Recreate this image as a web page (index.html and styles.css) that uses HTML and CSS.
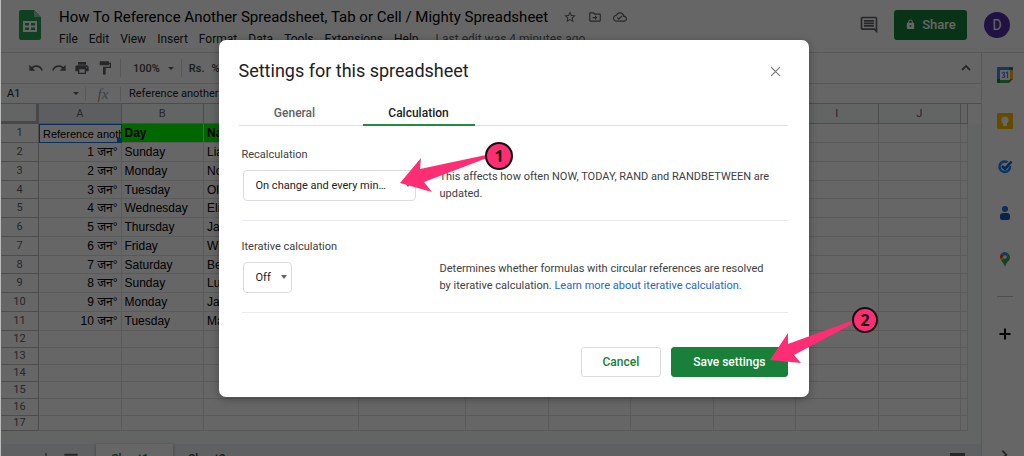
FILE: index.html
```html
<!DOCTYPE html>
<html lang="en">
<head>
<meta charset="utf-8">
<title>How To Reference Another Spreadsheet, Tab or Cell / Mighty Spreadsheet</title>
<link rel="stylesheet" href="styles.css">
</head>
<body>
<div class="app">
  <header class="header">
    <svg class="logo" viewBox="0 0 22 30"><path fill="#23a455" d="M2 0h13l7 7v21a2 2 0 0 1-2 2H2a2 2 0 0 1-2-2V2a2 2 0 0 1 2-2z"/><path fill="#8ed1b1" d="M15 0l7 7h-7z"/><path fill="#fff" fill-rule="evenodd" d="M4 11h14v11H4zM6 13v2.500h4V13zM12 13v2.500h4V13zM6 17.500V20h4v-2.500zM12 17.500V20h4v-2.500z"/></svg>
    <div class="doc">
      <div class="doc-top">
        <h1 class="doc-title">How To Reference Another Spreadsheet, Tab or Cell / Mighty Spreadsheet</h1>
        <svg class="icon14" viewBox="0 0 24 24"><path d="M22 9.240l-7.190-.620L12 2 9.190 8.630 2 9.240l5.460 4.730L5.820 21 12 17.270 18.180 21l-1.630-7.030L22 9.240zM12 15.400l-3.760 2.270 1-4.280-3.320-2.880 4.380-.380L12 6.100l1.710 4.040 4.380.380-3.320 2.880 1 4.280L12 15.400z"/></svg>
        <svg class="icon14" viewBox="0 0 24 24"><path d="M20 6h-8l-2-2H4c-1.100 0-2 .900-2 2v12c0 1.100.900 2 2 2h16c1.100 0 2-.900 2-2V8c0-1.100-.900-2-2-2zm0 12H4V6h5.170l2 2H20v10zm-8-1l4-4-4-4v3H8v2h4z"/></svg>
        <svg class="icon14" viewBox="0 0 24 24"><path d="M19.350 10.040C18.670 6.590 15.640 4 12 4 9.110 4 6.600 5.640 5.350 8.040 2.340 8.360 0 10.910 0 14c0 3.310 2.690 6 6 6h13c2.760 0 5-2.240 5-5 0-2.640-2.050-4.780-4.650-4.960zM19 18H6c-2.210 0-4-1.790-4-4s1.790-4 4-4h.710C7.370 7.690 9.480 6 12 6c3.040 0 5.500 2.460 5.500 5.500v.500H19c1.660 0 3 1.340 3 3s-1.340 3-3 3zm-9-3.820l-2.090-2.090L6.500 13.500 10 17l6.010-6.010-1.410-1.410z"/></svg>
      </div>
      <nav class="menu">
        <button>File</button><button>Edit</button><button>View</button><button>Insert</button><button>Format</button><button>Data</button><button>Tools</button><button>Extensions</button><button>Help</button>
        <a class="last-edit" href="#">Last edit was 4 minutes ago</a>
      </nav>
    </div>
    <svg class="icon20" viewBox="0 0 24 24"><path d="M21.990 4c0-1.100-.890-2-1.990-2H4c-1.100 0-2 .900-2 2v12c0 1.100.900 2 2 2h14l4 4-.010-18zM20 4v13.170L18.830 16H4V4h16zM6 12h12v2H6zm0-3h12v2H6zm0-3h12v2H6z"/></svg>
    <button class="share"><svg viewBox="0 0 24 24"><path d="M18 8h-1V6c0-2.760-2.240-5-5-5S7 3.240 7 6v2H6c-1.100 0-2 .900-2 2v10c0 1.100.900 2 2 2h12c1.100 0 2-.900 2-2V10c0-1.100-.900-2-2-2zm-6 9c-1.100 0-2-.900-2-2s.900-2 2-2 2 .900 2 2-.900 2-2 2zM9 8V6c0-1.660 1.340-3 3-3s3 1.340 3 3v2z"/></svg>Share</button>
    <button class="avatar">D</button>
  </header>

  <div class="workspace">
    <main class="editor">
      <div class="toolbar">
        <svg class="icon16" viewBox="0 0 24 24"><path d="M12.500 8c-2.650 0-5.050.990-6.900 2.600L2 7v9h9l-3.620-3.620c1.390-1.160 3.160-1.880 5.120-1.880 3.540 0 6.550 2.310 7.600 5.500l2.370-.780C21.080 11.030 17.150 8 12.500 8z"/></svg>
        <svg class="icon16" viewBox="0 0 24 24"><path d="M18.400 10.600C16.550 8.990 14.150 8 11.500 8c-4.650 0-8.580 3.030-9.960 7.220L3.900 16c1.050-3.190 4.050-5.500 7.600-5.500 1.950 0 3.730.720 5.120 1.880L13 16h9V7l-3.600 3.600z"/></svg>
        <svg class="icon16" viewBox="0 0 24 24"><path d="M19 8H5c-1.660 0-3 1.340-3 3v6h4v4h12v-4h4v-6c0-1.660-1.340-3-3-3zm-3 11H8v-5h8v5zm3-7c-.550 0-1-.450-1-1s.450-1 1-1 1 .450 1 1-.450 1-1 1zm-1-9H6v4h12V3z"/></svg>
        <svg class="icon16" viewBox="0 0 24 24"><path d="M18 4V3c0-.550-.450-1-1-1H5c-.550 0-1 .450-1 1v4c0 .550.450 1 1 1h12c.550 0 1-.450 1-1V6h1v4H9v11c0 .550.450 1 1 1h2c.550 0 1-.450 1-1v-9h8V4h-3z"/></svg>
        <span class="rule"></span>
        <button class="zoom">100%<i class="caret"></i></button>
        <span class="rule"></span>
        <button>Rs.</button>
        <button>%</button>
        <i class="caret toolbar-more"></i>
        <svg class="icon16" viewBox="0 0 24 24"><path d="M12 7l-7 7 2 2 5-5 5 5 2-2z"/></svg>
      </div>
      <div class="formula">
        <button class="name-box">A1<i class="caret"></i></button>
        <span class="fx">fx</span>
        <span class="formula-text">Reference another</span>
      </div>
      <div class="sheet">
        <table class="grid">
          <thead><tr><th class="corner"></th><th class="picked">A</th><th>B</th><th class="col-c">C</th><th class="col-d">D</th><th>E</th><th>F</th><th>G</th><th>H</th><th>I</th><th>J</th><th class="rest"></th></tr></thead>
          <tbody id="rows"></tbody>
        </table>
        <div class="gutter"></div>
      </div>
      <div class="hscroll"></div>
      <footer class="tabs">
        <svg class="icon16" viewBox="0 0 24 24"><path d="M13 3h-2v8H3v2h8v8h2v-8h8v-2h-8z"/></svg>
        <svg class="icon16" viewBox="0 0 24 24"><path d="M2 4h20v3H2zM2 11h20v2H2zM2 17h20v2H2z"/></svg>
        <button class="tab-on">Sheet1 <i class="caret"></i></button>
        <button>Sheet2 <i class="caret"></i></button>
        <span class="explore"></span>
      </footer>
    </main>
    <aside class="side">
      <svg class="side-icon" viewBox="0 0 16 16"><path fill="#4285f4" d="M1 0h11v3H3v9H0V1a1 1 0 0 1 1-1z"/><path fill="#1967d2" d="M12 0h3a1 1 0 0 1 1 1v2h-4z"/><path fill="#fbbc04" d="M13 3h3v9h-3z"/><path fill="#34a853" d="M3 13h9v3H3z"/><path fill="#188038" d="M0 12h3v4H1a1 1 0 0 1-1-1z"/><path fill="#ea4335" d="M12 12h4l-4 4z"/><path fill="#fff" d="M3 3h10v10H3z"/><path fill="none" stroke="#4285f4" stroke-width="1.200" d="M5 6.200Q7.500 4.500 7.500 6.500 7.500 8 6 8 8 8 7.700 9.500 7 11.200 5 10M9 6l1.500-.800V11"/></svg>
      <svg class="side-icon" viewBox="0 0 16 16"><rect width="16" height="16" rx="1" fill="#fbbc04"/><circle cx="8" cy="7" r="3.600" fill="#fff"/><path fill="#fff" d="M6 10h4v3H6z"/></svg>
      <svg class="side-icon" viewBox="0 0 16 16"><path fill="none" stroke="#2684fc" stroke-width="2.500" d="M10.500 3.200A5.300 5.300 0 1 0 13 7"/><path fill="none" stroke="#0066da" stroke-width="2.600" d="M5 7l3 2.800L14.500 2.500"/></svg>
      <svg class="side-icon" viewBox="0 0 16 16"><circle cx="8" cy="4" r="3" fill="#1a73e8"/><path fill="#185abc" d="M3 11q0-3 3-3h4q3 0 3 3v2q0 2-2 2H5q-2 0-2-2z"/></svg>
      <svg class="side-icon" viewBox="0 0 16 16"><path fill="#34a853" d="M13 6.500C13 10 9 11 8.500 15h-1C7 12.500 5.300 11 4.200 9.500L11.800 3q1.200 1.500 1.200 3.500z"/><path fill="#fbbc04" d="M4.200 9.500Q3 8 3 6l5-3 1.500 3z"/><path fill="#ea4335" d="M3 6q0-2 1.300-3.500L7 5 3.600 8z"/><path fill="#4285f4" d="M4.300 2.500Q8-.500 11.800 3L8.500 6.500z"/><circle cx="8" cy="6" r="1.800" fill="#fff"/></svg>
      <hr>
      <svg class="side-icon dark" viewBox="0 0 16 16"><path d="M7 2.500h2V7h4.500v2H9v4.500H7V9H2.500V7H7z"/></svg>
      <svg class="side-icon side-last" viewBox="0 0 24 24"><path d="M9 6l-2 2 5 5-5 5 2 2 7-7z"/></svg>
    </aside>
  </div>

  <div class="scrim">
    <form class="dialog" role="dialog" aria-labelledby="dlg-title">
      <div class="dialog-head">
        <h2 id="dlg-title">Settings for this spreadsheet</h2>
        <button type="button" class="close" aria-label="Close"><svg viewBox="0 0 10 10"><path d="M1 1l8 8M9 1L1 9"/></svg></button>
      </div>
      <div class="dialog-tabs" role="tablist">
        <button type="button" role="tab">General</button>
        <button type="button" role="tab" class="current">Calculation</button>
      </div>
      <section class="setting">
        <label for="recalc">Recalculation</label>
        <div class="setting-row">
          <div class="control"><span class="select select-wide"><select id="recalc"><option>On change and every min…</option></select></span></div>
          <p>This affects how often NOW, TODAY, RAND and RANDBETWEEN are updated.</p>
        </div>
      </section>
      <section class="setting">
        <label for="iter">Iterative calculation</label>
        <div class="setting-row">
          <div class="control"><span class="select"><select id="iter"><option>Off</option><option>On</option></select></span></div>
          <p>Determines whether formulas with circular references are resolved by iterative calculation. <a href="#">Learn more about iterative calculation.</a></p>
        </div>
      </section>
      <div class="actions">
        <button type="button" class="btn">Cancel</button>
        <button type="button" class="btn btn-primary">Save settings</button>
      </div>
    </form>
  </div>

  <svg class="callouts" viewBox="0 0 1024 456">
    <path d="M400 183l21-25-1 11 66-14 1 3-63 24 8 10z"/>
    <circle cx="499" cy="156" r="13"/>
    <text x="499" y="162">1</text>
    <path d="M770 360l18-27v11l66-24v3l-60 32 7 8z"/>
    <circle cx="865" cy="320" r="12"/>
    <text x="865" y="326">2</text>
  </svg>
</div>
<script src="grid.js"></script>
</body>
</html>
```
FILE: grid.js
```
const days = ["Sunday", "Monday", "Tuesday", "Wednesday", "Thursday", "Friday", "Saturday", "Sunday", "Monday", "Tuesday"];
const names = ["Lia", "No", "Oli", "Eli", "Ja", "Wi", "Be", "Lu", "Ja", "Ma"];
const body = document.getElementById("rows");

for (let n = 1; n <= 17; n++) {
  const tr = body.insertRow();
  const head = document.createElement("th");
  head.textContent = n;
  tr.append(head);
  let values = [];
  if (n === 1) {
    tr.className = "titles";
    values = ["Reference another", "Day", "Na"];
  } else if (n <= 11) {
    values = [(n - 1) + " जन°", days[n - 2], names[n - 2]];
  } else {
    tr.className = "blank";
  }
  for (let c = 0; c < 11; c++) {
    const cell = tr.insertCell();
    const text = document.createElement("div");
    text.textContent = values[c] || "";
    cell.append(text);
  }
}
```
FILE: styles.css
```css
* { box-sizing: border-box; }
body { margin: 0; overflow: hidden; font-family: Roboto, "Liberation Sans", sans-serif; font-size: 12px; color: #202124; background: #fff; }
button { font: inherit; color: inherit; background: none; border: 0; padding: 0; }
svg { flex: none; fill: #5f6368; }
a { text-decoration: none; }
.app { position: relative; height: 100vh; display: flex; flex-direction: column; overflow: hidden; border-left: 1px solid #bbb; }
.icon14 { width: 14px; height: 14px; }
.icon16 { width: 16px; height: 16px; }
.icon20 { width: 20px; height: 20px; }
.caret { display: inline-block; border: 3px solid transparent; border-top-color: #5f6368; border-bottom: 0; }

.header { flex: none; height: 53px; display: flex; align-items: center; padding: 0 14px 3px 18px; border-bottom: 1px solid #dadce0; }
.logo { width: 22px; height: 30px; margin-right: 18px; }
.doc { flex: 1; min-width: 0; padding-top: 7px; }
.doc-top { display: flex; align-items: center; gap: 11px; height: 22px; }
.doc-title { margin: 0 4px 0 0; font: 15px/22px Roboto, sans-serif; color: #000; white-space: nowrap; }
.menu { display: flex; gap: 11px; line-height: 23px; white-space: nowrap; }
.menu button { line-height: 23px; }
.last-edit { margin-left: 6px; color: #5f6368; }
.share { display: flex; align-items: center; justify-content: center; gap: 6px; width: 73px; height: 30px; margin: 0 17px 0 15px; border-radius: 3px; background: #188038; color: #fff; font-weight: 500; font-size: 13px; }
.share svg { width: 11px; height: 11px; fill: #fff; }
.avatar { width: 26px; height: 26px; border-radius: 50%; background: #512da8; color: #fff; font-size: 14px; }

.workspace { flex: 1; min-height: 0; display: flex; }
.editor { flex: 1; min-width: 0; display: flex; flex-direction: column; }
.toolbar { flex: none; height: 31px; display: flex; align-items: center; gap: 7px; padding: 0 7px 0 27px; border-bottom: 1px solid #dadce0; color: #444746; font-size: 11px; font-weight: 500; }
.rule { width: 1px; height: 18px; background: #dadce0; }
.zoom { display: flex; align-items: center; gap: 8px; margin-left: 5px; }
.toolbar-more { margin: 0 142px 0 auto; }
.formula { flex: none; height: 20px; display: flex; align-items: center; border-bottom: 1px solid #c0c0c0; }
.name-box { display: flex; align-items: center; justify-content: space-between; width: 85px; height: 14px; padding: 0 6px; border-right: 1px solid #dadce0; font-size: 11px; }
.fx { width: 35px; text-align: center; border-right: 1px solid #dadce0; color: #9aa0a6; font: italic 15px/14px "Liberation Serif", serif; }
.formula-text { padding-left: 8px; font-size: 11px; }

.sheet { flex: none; display: flex; }
.grid { flex: 1; width: 100%; min-width: 0; table-layout: fixed; border-spacing: 0; }
.grid th, .grid td { height: 19px; padding: 0; border: solid #e0e0e0; border-width: 0 1px 1px 0; overflow: hidden; white-space: nowrap; line-height: 16px; }
.grid tbody tr:nth-child(4n) > * { height: 18px; }
.grid thead th { height: 20px; background: #f8f9fa; border-color: #c0c0c0; }
.grid th { color: #5f6368; font-size: 11px; font-weight: 400; border-color: #c0c0c0; }
.grid thead .picked { background: #e8eaed; }
.grid thead .corner { width: 38px; border-width: 0 3px 3px 0; border-color: #b5b5b5; }
.grid .col-c { width: 155px; }
.grid .col-d { width: 107px; }
.grid .rest { width: 7px; }
.grid td { font-family: "Liberation Sans", "Noto Sans", sans-serif; font-size: 12px; color: #000; }
.grid td div { padding: 0 3px; overflow: hidden; }
.grid td:nth-child(2) { text-align: right; }
.grid tbody tr.blank > * { height: 17px; line-height: 14px; }
.grid tbody tr.blank:last-child > * { height: 15px; }
.titles td:nth-child(n+3):nth-child(-n+5) { background: #0f0; font-weight: 700; }
.grid .titles td:nth-child(2) { position: relative; border: 1px solid #1a73e8; text-align: left; font-size: 11px; }
.grid .titles td:nth-child(2)::after { content: ""; position: absolute; right: 0; bottom: 0; width: 4px; height: 4px; background: #1a73e8; }
.gutter { flex: none; width: 13px; margin-top: 20px; background: #f8f9fa; }
.hscroll { flex: none; height: 13px; background: #f8f9fa; }
.tabs { flex: none; height: 30px; display: flex; align-items: center; gap: 9px; padding: 0 16px 0 37px; background: #eef1f4; font-weight: 500; }
.tabs button { height: 30px; padding: 0 6px; color: #444746; }
.tabs .tab-on { width: 77px; margin-left: 8px; background: #fff; color: #188038; box-shadow: 0 1px 3px #999; }
.explore { width: 15px; height: 12px; margin-left: auto; background: #5f6368; }

.side { flex: none; width: 43px; display: flex; flex-direction: column; align-items: center; gap: 30px; padding: 14px 0 0 4px; border-left: 1px solid #dadce0; }
.side-icon { width: 16px; height: 16px; }
.side hr { width: 16px; margin: -1px 0; border: 0; border-top: 1px solid #bdc1c6; }
.dark { fill: #000; }
.side-last { margin-top: 74px; }

.scrim { position: absolute; inset: 0; padding: 40px 0 0 2px; background: rgba(0, 0, 0, .6); }
.dialog { max-width: 590px; margin: 0 auto; padding: 16px 21px 20px 20px; border-radius: 7px; background: #fff; box-shadow: 0 2px 8px rgba(0, 0, 0, .3); }
.dialog-head { display: flex; align-items: center; justify-content: space-between; height: 30px; padding-right: 7px; }
.dialog h2 { margin: 0; font: 18px/30px Roboto, sans-serif; color: #202124; }
.close svg { display: block; width: 11px; height: 11px; fill: none; stroke: #757575; stroke-width: 1; }
.dialog-tabs { display: flex; gap: 12px; height: 40px; padding-top: 15px; border-bottom: 1px solid #e0e0e0; color: #5f6368; }
.dialog-tabs button { width: 112px; height: 25px; border-bottom: 2px solid transparent; font-weight: 500; }
.dialog-tabs .current { color: #202124; border-color: #1e8e3e; }
.setting { padding: 20px 0 18px; margin-left: 3px; border-bottom: 1px solid #e8eaed; color: #3c4043; font-size: 11px; }
.setting + .setting { padding-top: 17px; }
.setting label { display: block; line-height: 18px; }
.setting-row { display: flex; margin-top: 6px; }
.control { flex: none; width: 198px; padding-left: 1px; }
.setting p { flex: 1; margin: -2px 0 0; padding-right: 12px; line-height: 17px; color: #3c4043; }
.setting a { color: #1967d2; }
.select { position: relative; display: block; width: 49px; }
.select-wide { width: 173px; }
.select::after { content: ""; position: absolute; right: 5px; top: 13px; border: 3px solid transparent; border-top: 4px solid #5f6368; border-bottom: 0; }
.select select { appearance: none; display: block; width: 100%; height: 31px; padding: 0 0 0 12px; border: 1px solid #dadce0; border-radius: 4px; background: #fff; font: 11px Roboto, sans-serif; color: #202124; }
.actions { display: flex; justify-content: flex-end; gap: 10px; margin-top: 34px; }
.btn { height: 30px; padding: 0 21px; border: 1px solid #dadce0; border-radius: 3px; color: #188038; font-weight: 500; font-size: 12px; }
.btn-primary { border-color: #188038; background: #188038; color: #fff; }

.callouts { position: absolute; top: 0; left: -1px; width: 1024px; height: 456px; fill: #ff2e74; pointer-events: none; }
.callouts circle { stroke: #111; stroke-width: 2; }
.callouts text { fill: #111; font: 700 16px "Noto Sans", sans-serif; text-anchor: middle; }
```
